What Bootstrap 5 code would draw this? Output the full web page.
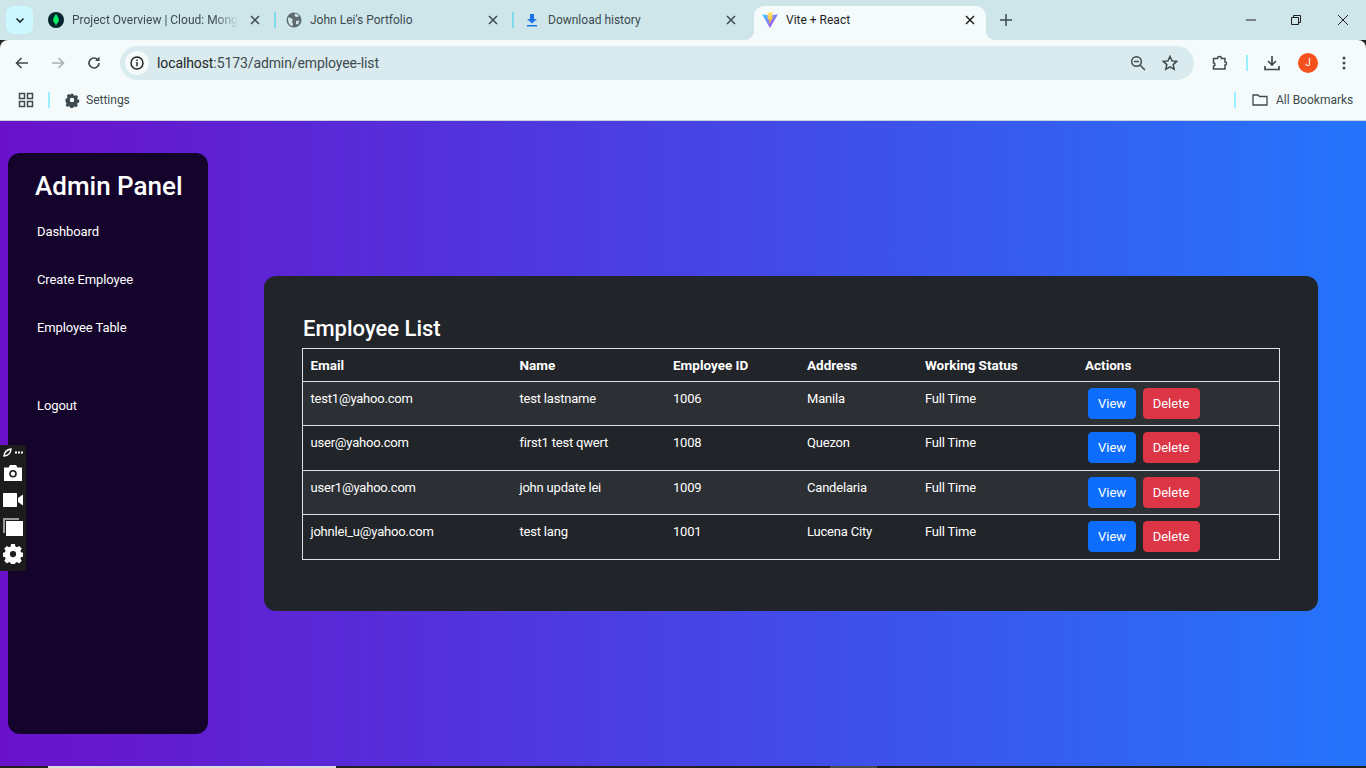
<!DOCTYPE html>
<html lang="en">
<head>
  <meta charset="UTF-8" />
  <meta name="viewport" content="width=device-width, initial-scale=1.0" />
  <title>Vite + React</title>
  <link href="https://cdn.jsdelivr.net/npm/bootstrap@5.3.3/dist/css/bootstrap.min.css" rel="stylesheet" />
  <style>
    html, body {
      height: 100%;
      overflow: hidden;
    }

    body {
      font-family: Roboto, "Noto Sans", sans-serif;
      font-size: 14px;
      display: flex;
      flex-direction: column;
      background: #212121;
    }

    /* browser frame */
    .tab-strip {
      height: 40px;
      background: #cee6ea;
      padding-left: 6px;
      font-size: 12px;
      color: #3d4a4f;
    }

    .tab-search {
      width: 27px;
      height: 28px;
      margin-top: 6px;
      margin-right: 5px;
      border-radius: 8px;
      background: #ccf7ff;
    }

    .tab-item {
      width: 238px;
      height: 34px;
      margin-top: 6px;
      padding-left: 10px;
      padding-bottom: 6px;
      position: relative;
    }

    .tab-item.is-active {
      background: #f5fbfb;
      color: #1f1f1f;
      border-radius: 10px 10px 0 0;
      margin-left: 2px;
      width: 232px;
      padding-left: 8px;
    }

    .tab-item.is-active::before,
    .tab-item.is-active::after {
      content: "";
      position: absolute;
      bottom: 0;
      width: 10px;
      height: 10px;
    }

    .tab-item.is-active::before {
      left: -10px;
      background: radial-gradient(circle at 0 0, #cee6ea 10px, #f5fbfb 10.5px);
    }

    .tab-item.is-active::after {
      right: -10px;
      background: radial-gradient(circle at 100% 0, #cee6ea 10px, #f5fbfb 10.5px);
    }

    .tab-icon {
      width: 16px;
      height: 16px;
      flex: none;
      margin-right: 8px;
    }

    .tab-title {
      width: 167px;
      white-space: nowrap;
      overflow: hidden;
    }

    .tab-title.is-faded {
      -webkit-mask-image: linear-gradient(90deg, #000 85%, transparent);
      mask-image: linear-gradient(90deg, #000 85%, transparent);
    }

    .tab-close {
      width: 10px;
      height: 10px;
      margin-left: 11px;
      flex: none;
    }

    .tab-sep {
      position: absolute;
      right: 0;
      top: 6px;
      width: 2px;
      height: 16px;
      background: #7ed9e8;
    }

    .win-btn {
      position: absolute;
      top: 14px;
      width: 12px;
      height: 12px;
    }

    .tool-bar {
      height: 46px;
      background: #f5fbfb;
      border-radius: 8px 8px 0 0;
      color: #1f1f1f;
    }

    .tool-icon {
      width: 16px;
      height: 16px;
      flex: none;
    }

    .omni-box {
      width: 1074px;
      height: 34px;
      background: #d9ebee;
      border-radius: 17px;
      padding: 0 16px 0 5px;
      font-size: 14px;
      letter-spacing: -0.1px;
      color: #1f1f1f;
    }

    .omni-info {
      width: 24px;
      height: 24px;
      border-radius: 50%;
      background: #f5fbfb;
      margin-right: 8px;
    }

    .omni-dim {
      color: #3d4a4f;
    }

    .book-bar {
      height: 35px;
      background: #f5fbfb;
      border-bottom: 1px solid #c8d4d6;
      padding-bottom: 7px;
      font-size: 12px;
      color: #3d4a4f;
    }

    .book-sep {
      width: 2px;
      height: 16px;
      background: #9befff;
    }

    .profile-dot {
      width: 20px;
      height: 20px;
      border-radius: 50%;
      background: #f4511e;
      color: #fff;
      font-size: 10px;
      line-height: 20px;
      text-align: center;
    }

    /* the app */
    .app-page {
      height: 645px;
      flex: none;
      position: relative;
      background: linear-gradient(90deg, #6a11cb 0%, #2575fc 100%);
      padding: 32px 48px 32px 8px;
      color: #fff;
    }

    .side-panel {
      width: 200px;
      height: 581px;
      flex: none;
      border-radius: 12px;
      background: #14042b;
      padding: 16px 0 0 29px;
    }

    .side-title {
      font-size: 26px;
      font-weight: 500;
      line-height: 34px;
      margin: 0 0 18px -2px;
      white-space: nowrap;
    }

    .side-link {
      display: block;
      color: #fff;
      text-decoration: none;
      font-size: 13px;
      letter-spacing: -0.1px;
      line-height: 21px;
      height: 48px;
    }

    .side-link.is-last {
      margin-top: 30px;
    }

    .main-area {
      padding-left: 56px;
      padding-top: 123px;
    }

    .list-panel {
      width: 1054px;
      height: 335px;
      border-radius: 12px;
      background: #212529;
      padding: 38px;
    }

    .list-title {
      font-size: 22px;
      font-weight: 500;
      line-height: 30px;
      margin: 0 0 4px 1px;
    }

    .emp-table {
      table-layout: fixed;
      width: 977px;
      border: 1px solid #dee2e6;
      margin: 0;
      font-size: 13px;
      letter-spacing: -0.2px;
    }

    .emp-table th,
    .emp-table td {
      padding: 6px 8px 6px 7.5px;
      vertical-align: top;
      line-height: 21px;
      white-space: nowrap;
    }

    .emp-table th {
      padding-bottom: 5px;
      font-size: 13.5px;
      letter-spacing: 0;
    }

    .emp-table tbody tr:nth-child(odd) {
      height: 44px;
    }

    .emp-table tbody tr:nth-child(even) {
      height: 45px;
    }

    .act-btn {
      margin: 0 3.5px 0 3px;
      font-size: 13px;
      line-height: 21px;
    }

    .act-btn.btn-primary {
      width: 48px;
      padding-left: 0;
      padding-right: 0;
    }

    .act-btn.btn-danger {
      width: 57px;
      padding-left: 0;
      padding-right: 0;
    }

    /* floating capture bar */
    .capture-bar {
      position: absolute;
      left: 0;
      top: 324px;
      width: 26px;
      height: 126px;
      background: #1c1c1c;
      border-radius: 0 4px 4px 0;
      padding-top: 3px;
    }

    .capture-bar svg {
      display: block;
      margin: 0 auto;
    }

    .task-edge {
      height: 2px;
      flex: none;
      background: #212121;
      position: relative;
    }

    .task-edge i {
      position: absolute;
      top: 0;
      height: 2px;
    }
  </style>
</head>
<body>

  <!-- tabs -->
  <div class="tab-strip d-flex flex-none position-relative">
    <div class="tab-search d-flex align-items-center justify-content-center">
      <svg width="10" height="10" viewBox="0 0 10 10"><path d="M1.5 3.5 5 7l3.500-3.500" fill="none" stroke="#1f2a2e" stroke-width="1.6"/></svg>
    </div>

    <div class="tab-item d-flex align-items-center">
      <svg class="tab-icon" viewBox="0 0 16 16"><circle cx="8" cy="8" r="8" fill="#04232c"/><path d="M8 1.800C6 4.400 5 6.600 5.200 8.600c.2 1.800 1.400 3 2.400 3.600l.1 1.800h.6l.1-1.800c1-.7 2.200-1.900 2.400-3.600C11 6.600 10 4.400 8 1.800z" fill="#00ed64"/></svg>
      <span class="tab-title is-faded">Project Overview | Cloud: MongoDB Cloud</span>
      <svg class="tab-close" viewBox="0 0 10 10"><path d="M1 1l8 8M9 1 1 9" stroke="#3d4a4f" stroke-width="1.5"/></svg>
      <span class="tab-sep"></span>
    </div>

    <div class="tab-item d-flex align-items-center">
      <svg class="tab-icon" viewBox="0 0 16 16"><circle cx="8" cy="8" r="7.5" fill="#5f6a6e"/><path d="M2 5.500l3 .5 2 2-1 1.500 1 3-1 1.500C3.500 13.500 1.500 9.500 2 5.500zM9 1.500l-.5 2L10 5l3-.5-1-2zM10 9l3.500-.5-1.500 4-2-.5z" fill="#cee6ea"/></svg>
      <span class="tab-title">John Lei's Portfolio</span>
      <svg class="tab-close" viewBox="0 0 10 10"><path d="M1 1l8 8M9 1 1 9" stroke="#3d4a4f" stroke-width="1.5"/></svg>
      <span class="tab-sep"></span>
    </div>

    <div class="tab-item d-flex align-items-center">
      <svg class="tab-icon" viewBox="0 0 16 16"><path d="M6 2h4v5h3L8 11.500 3 7h3zM3 13h10v1.500H3z" fill="#1a73e8"/></svg>
      <span class="tab-title">Download history</span>
      <svg class="tab-close" viewBox="0 0 10 10"><path d="M1 1l8 8M9 1 1 9" stroke="#3d4a4f" stroke-width="1.5"/></svg>
    </div>

    <div class="tab-item is-active d-flex align-items-center">
      <svg class="tab-icon" viewBox="0 0 16 16">
        <defs>
          <linearGradient id="viteA" x1="0" y1="0" x2="1" y2="1"><stop offset="0" stop-color="#41d1ff"/><stop offset="1" stop-color="#bd34fe"/></linearGradient>
          <linearGradient id="viteB" x1="0" y1="0" x2="0" y2="1"><stop offset="0" stop-color="#ffea83"/><stop offset="1" stop-color="#ffa800"/></linearGradient>
        </defs>
        <path d="M0 2.200 8 3.600l8-1.400L8.300 15.500a.4.4 0 0 1-.7 0z" fill="url(#viteA)"/>
        <path d="M5.400.6 11.300 0l-1.500 4.800 1.700-.3L6.800 12.500l.8-5.200-1.700.4z" fill="url(#viteB)"/>
      </svg>
      <span class="tab-title">Vite + React</span>
      <svg class="tab-close" style="margin-left:12px" viewBox="0 0 10 10"><path d="M1 1l8 8M9 1 1 9" stroke="#1f1f1f" stroke-width="1.5"/></svg>
    </div>

    <svg class="win-btn" style="left:1000px" viewBox="0 0 12 12"><path d="M6 0v12M0 6h12" stroke="#3d4a4f" stroke-width="1.5"/></svg>
    <svg class="win-btn" style="left:1245px" viewBox="0 0 12 12"><path d="M1 6h10" stroke="#1f1f1f" stroke-width="1"/></svg>
    <svg class="win-btn" style="left:1290px" viewBox="0 0 12 12"><path d="M1.500 3.500h7v7h-7zM3.500 3.500v-2h7v7h-2" fill="none" stroke="#1f1f1f" stroke-width="1"/></svg>
    <svg class="win-btn" style="left:1337px" viewBox="0 0 12 12"><path d="M1 1l10 10M11 1 1 11" stroke="#1f1f1f" stroke-width="1"/></svg>
  </div>

  <!-- toolbar -->
  <div class="tool-bar d-flex align-items-center flex-none">
    <svg class="tool-icon" style="margin-left:14px" viewBox="0 0 16 16"><path d="M14 8H3M7.500 3 2.500 8l5 5" fill="none" stroke="#3d4a4f" stroke-width="1.6"/></svg>
    <svg class="tool-icon" style="margin-left:20px" viewBox="0 0 16 16"><path d="M2 8h11M8.500 3l5 5-5 5" fill="none" stroke="#a4b0b3" stroke-width="1.6"/></svg>
    <svg class="tool-icon" style="margin-left:20px;margin-right:18px" viewBox="0 0 16 16"><path d="M13 8a5 5 0 1 1-1.500-3.600" fill="none" stroke="#3d4a4f" stroke-width="1.6"/><path d="M13.500 1.500v4.500H9z" fill="#3d4a4f"/></svg>
    <div class="omni-box d-flex align-items-center">
      <span class="omni-info d-flex align-items-center justify-content-center">
        <svg width="16" height="16" viewBox="0 0 16 16"><circle cx="8" cy="8" r="6" fill="none" stroke="#1f1f1f" stroke-width="1.4"/><path d="M8 7v4.200M8 4.600v1.300" stroke="#1f1f1f" stroke-width="1.4"/></svg>
      </span>
      <span>localhost<span class="omni-dim">:5173/admin/employee-list</span></span>
      <svg class="tool-icon ms-auto" viewBox="0 0 16 16"><circle cx="6.500" cy="6.500" r="4.800" fill="none" stroke="#3d4a4f" stroke-width="1.5"/><path d="M10 10l5 5" stroke="#3d4a4f" stroke-width="1.5"/><path d="M4 6.500h5" stroke="#3d4a4f" stroke-width="1.5"/></svg>
      <svg class="tool-icon" style="margin-left:16px" viewBox="0 0 16 16"><path d="M8 1.500l2 4.400 4.700.5-3.500 3.200 1 4.700L8 11.900l-4.200 2.400 1-4.700L1.300 6.400 6 5.900z" fill="none" stroke="#3d4a4f" stroke-width="1.5"/></svg>
    </div>
    <svg class="tool-icon" style="margin-left:18px" viewBox="0 0 16 16"><path d="M1.500 3.500h4a2 2 0 0 1 4 0h3.500v3.500a1.500 1.500 0 0 1 0 3V14H1.500v-3a1.500 1.500 0 0 0 0-3z" fill="none" stroke="#3d4a4f" stroke-width="1.5"/></svg>
    <span class="book-sep" style="margin-left:18px"></span>
    <svg class="tool-icon" style="margin-left:16px" viewBox="0 0 16 16"><path d="M8 1v8.500M4 6l4 4 4-4M1 11v3.500h14V11" fill="none" stroke="#3d4a4f" stroke-width="1.7"/></svg>
    <span class="profile-dot" style="margin-left:18px">J</span>
    <svg class="tool-icon" style="margin-left:18px" viewBox="0 0 16 16"><circle cx="8" cy="3" r="1.500" fill="#3d4a4f"/><circle cx="8" cy="8" r="1.500" fill="#3d4a4f"/><circle cx="8" cy="13" r="1.500" fill="#3d4a4f"/></svg>
  </div>

  <!-- bookmarks -->
  <div class="book-bar d-flex align-items-center flex-none">
    <svg class="tool-icon" style="margin-left:18px" viewBox="0 0 16 16"><path d="M1.500 1.500h5v5h-5zM9.500 1.500h5v5h-5zM1.500 9.500h5v5h-5zM9.500 9.500h5v5h-5z" fill="none" stroke="#3d4a4f" stroke-width="1.5"/></svg>
    <span class="book-sep" style="margin-left:14px"></span>
    <svg class="tool-icon" style="margin-left:14px;margin-right:6px" viewBox="0 0 16 16"><path d="M6.500 1h3l.4 1.800 1.300.6 1.600-1 2 2.100-1 1.600.6 1.300 1.600.4v3l-1.800.4-.6 1.300 1 1.600-2.100 2-1.600-1-1.300.6-.4 1.600h-3l-.4-1.800-1.300-.6-1.600 1-2-2.100 1-1.600-.6-1.300L.7 9.500v-3l1.800-.4.600-1.300-1-1.600 2.100-2 1.600 1 1.300-.6zM8 5.500a2.500 2.500 0 1 0 0 5 2.500 2.500 0 0 0 0-5z" fill="#3d4a4f" fill-rule="evenodd" transform="translate(.8 .8) scale(.9)"/></svg>
    <span>Settings</span>
    <span class="book-sep ms-auto"></span>
    <svg class="tool-icon" style="margin-left:16px;margin-right:8px" viewBox="0 0 16 16"><path d="M1 3h5l1.500 1.500H15V13H1z" fill="none" stroke="#3d4a4f" stroke-width="1.3"/></svg>
    <span style="width:90px;white-space:nowrap">All Bookmarks</span>
  </div>

  <!-- page -->
  <div class="app-page d-flex">
    <aside class="side-panel">
      <h1 class="side-title">Admin Panel</h1>
      <a class="side-link" href="#">Dashboard</a>
      <a class="side-link" href="#">Create Employee</a>
      <a class="side-link" href="#">Employee Table</a>
      <a class="side-link is-last" href="#">Logout</a>
    </aside>

    <div class="main-area">
      <div class="list-panel">
        <h3 class="list-title">Employee List</h3>
        <table class="table table-dark table-striped emp-table">
          <colgroup>
            <col style="width:209.5px" />
            <col style="width:153.5px" />
            <col style="width:134px" />
            <col style="width:118px" />
            <col style="width:160px" />
            <col style="width:202px" />
          </colgroup>
          <thead>
            <tr>
              <th>Email</th>
              <th>Name</th>
              <th>Employee ID</th>
              <th>Address</th>
              <th>Working Status</th>
              <th>Actions</th>
            </tr>
          </thead>
          <tbody id="rows"></tbody>
        </table>
      </div>
    </div>

    <div class="capture-bar">
      <svg width="20" height="9" viewBox="0 0 20 9" style="margin-bottom:8px"><path d="M1 8C1.500 4 4 1.500 8 1c-.3 4-2.500 6.500-7 7z" fill="none" stroke="#fff" stroke-width="1.5"/><rect x="12" y="3.500" width="2" height="2" fill="#fff"/><rect x="15" y="3.500" width="2" height="2" fill="#fff"/><rect x="18" y="3.500" width="2" height="2" fill="#fff"/></svg>
      <svg width="20" height="16" viewBox="0 0 20 16"><path fill-rule="evenodd" d="M1 2.500h4.500L7 0h6l1.500 2.500H19V16H1zM10 5a3.800 3.800 0 1 0 0 7.600A3.800 3.800 0 0 0 10 5zm0 1.600a2.200 2.200 0 1 1 0 4.400 2.200 2.200 0 0 1 0-4.400z" fill="#fff"/></svg>
      <svg width="20" height="14" viewBox="0 0 20 14" style="margin-top:12px"><path d="M0 1C0 .4.400 0 1 0h12c.6 0 1 .4 1 1v12c0 .6-.4 1-1 1H1c-.6 0-1-.4-1-1zM15 5l5-3.500v11L15 9z" fill="#fff"/></svg>
      <svg width="20" height="18" viewBox="0 0 20 18" style="margin-top:11px"><path d="M0 0h16v2H2v13H0z" fill="#9a9a9a"/><path d="M3 3h17v15H3z" fill="#fff"/></svg>
      <svg width="20" height="20" viewBox="0 0 16 16" style="margin-top:8px"><path fill-rule="evenodd" d="M6.500 0h3l.4 2 1.300.6 1.700-1.100 2.100 2.100-1.100 1.700.6 1.300 2 .4v3l-2 .4-.6 1.300 1.100 1.700-2.100 2.100-1.700-1.100-1.300.6-.4 2h-3l-.4-2-1.300-.6-1.700 1.100-2.100-2.100 1.100-1.700-.6-1.300-2-.4v-3l2-.4.6-1.300-1.100-1.700 2.100-2.100 1.700 1.100 1.300-.6zM8 5.500a2.500 2.500 0 1 0 0 5 2.500 2.500 0 0 0 0-5z" fill="#fff"/></svg>
    </div>
  </div>

  <div class="task-edge">
    <i style="left:48px;width:288px;background:#dcdcdc"></i>
    <i style="left:830px;width:47px;background:#4a4a4a"></i>
  </div>

  <script>
    const empleados = [
      ["test1@yahoo.com", "test lastname", "1006", "Manila"],
      ["user@yahoo.com", "first1 test qwert", "1008", "Quezon"],
      ["user1@yahoo.com", "john update lei", "1009", "Candelaria"],
      ["johnlei_u@yahoo.com", "test lang", "1001", "Lucena City"]
    ];

    document.getElementById("rows").innerHTML = empleados.map(function (e) {
      return `<tr>
        <td>${e[0]}</td><td>${e[1]}</td><td>${e[2]}</td><td>${e[3]}</td><td>Full Time</td>
        <td><button class="btn btn-primary btn-sm act-btn">View</button><button class="btn btn-danger btn-sm act-btn">Delete</button></td>
      </tr>`;
    }).join("");
  </script>
  <script src="https://cdn.jsdelivr.net/npm/bootstrap@5.3.3/dist/js/bootstrap.bundle.min.js"></script>
</body>
</html>
